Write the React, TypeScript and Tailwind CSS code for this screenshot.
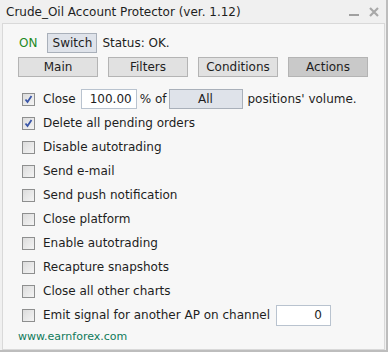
import React from "react";

const font = { fontFamily: "'DejaVu Sans', sans-serif" };

function CheckBox({ checked }: { checked?: boolean }) {
  return (
    <span className="flex h-[13px] w-[13px] shrink-0 items-center justify-center border border-[#8e8f8f] bg-gradient-to-br from-[#dcdcdc] to-[#f4f4f4]">
      {checked && (
        <svg width="9" height="9" viewBox="0 0 9 9">
          <path d="M1.5 4.5 L3.5 7 L7.5 1" fill="none" stroke="#3a56a8" strokeWidth="1.8" />
        </svg>
      )}
    </span>
  );
}

function Row({ label, checked, children }: { label: string; checked?: boolean; children?: React.ReactNode }) {
  return (
    <div className="flex h-[24px] items-center pl-[19px]">
      <CheckBox checked={checked} />
      <span className="ml-[8px] whitespace-nowrap">{label}</span>
      {children}
    </div>
  );
}

const tabs = ["Main", "Filters", "Conditions", "Actions"];

const options = [
  "Disable autotrading",
  "Send e-mail",
  "Send push notification",
  "Close platform",
  "Enable autotrading",
  "Recapture snapshots",
  "Close all other charts",
];

export default function App() {
  return (
    <div
      className="flex h-[352px] w-[388px] flex-col border-r-2 border-b-2 border-[#bdbdbd] bg-[#f0f0f0] text-[12px] text-[#1e1e1e]"
      style={font}
    >
      {/* Title bar */}
      <div className="flex h-[23px] items-center pl-[6px] pr-[6px]">
        <span className="flex-1 whitespace-nowrap">Crude_Oil Account Protector (ver. 1.12)</span>
        <span className="mr-[10px] mt-[6px] h-[2px] w-[10px] bg-[#a0a0a0]" />
        <svg width="10" height="10" viewBox="0 0 10 10" className="mr-[1px]">
          <path d="M1 1 L9 9 M9 1 L1 9" stroke="#a8a8a8" strokeWidth="2.2" />
        </svg>
      </div>

      {/* Panel */}
      <div className="ml-[2px] mr-[1px] flex flex-1 flex-col border border-[#d9d9d9] bg-[#f7f7f7]">
        <div className="mt-[9px] flex h-[20px] items-center pl-[16px]">
          <span className="text-[#1f8a1f]">ON</span>
          <span className="ml-[10px] flex h-[20px] w-[50px] items-center justify-center border border-[#a9b0ba] bg-[#dfe3ea]">
            Switch
          </span>
          <span className="ml-[5px]">Status: OK.</span>
        </div>

        <div className="mt-[4px] flex gap-[10px] pl-[15px]">
          {tabs.map((t) => (
            <span
              key={t}
              className={
                t === "Actions"
                  ? "flex h-[20px] w-[80px] items-center justify-center border border-[#b4b4b4] bg-[#c9c9c9]"
                  : "flex h-[20px] w-[80px] items-center justify-center border border-[#b4b4b4] bg-[#e1e1e1]"
              }
            >
              {t}
            </span>
          ))}
        </div>

        <div className="mt-[10px] flex flex-col">
          <Row label="Close" checked>
            <span className="ml-[5px] flex h-[20px] w-[56px] items-center justify-end border border-[#b9c3cf] bg-white pr-[4px]">
              100.00
            </span>
            <span className="ml-[3px]">% of</span>
            <span className="ml-[2px] flex h-[20px] w-[74px] items-center justify-center border border-[#a9b0ba] bg-[#dfe3ea]">
              All
            </span>
            <span className="ml-[5px] whitespace-nowrap">positions' volume.</span>
          </Row>
          <Row label="Delete all pending orders" checked />
          {options.map((o) => (
            <Row key={o} label={o} />
          ))}
          <Row label="Emit signal for another AP on channel">
            <span className="ml-[6px] flex h-[21px] w-[55px] items-center justify-end border border-[#b9c3cf] bg-white pr-[8px]">
              0
            </span>
          </Row>
        </div>

        <div className="mt-[2px] pl-[15px] text-[11px] text-[#0f7a5a]">www.earnforex.com</div>
      </div>
    </div>
  );
}
